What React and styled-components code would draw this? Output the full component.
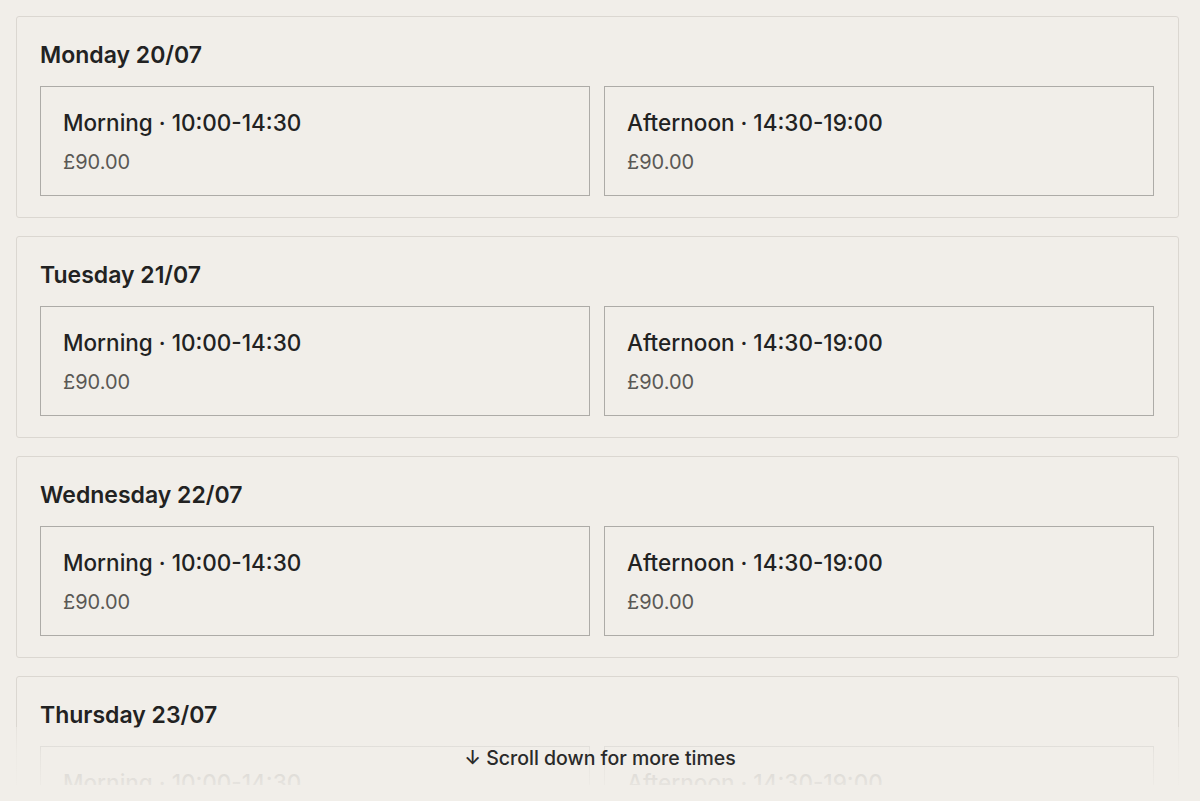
import React from 'react'
import styled, { createGlobalStyle } from 'styled-components'

const GlobalStyle = createGlobalStyle`
    html, body {
        margin: 0;
        padding: 0;
        background: #f1eee9;
        font-family: Inter, "Noto Sans", sans-serif;
        color: #222;
    }
`

const Page = styled.div`
    height: 801px;
    box-sizing: border-box;
    padding: 16px 21px 16px 16px;
`

const Viewport = styled.div`
    position: relative;
    height: 100%;
    overflow: hidden;
`

const List = styled.div`
    display: flex;
    flex-direction: column;
    gap: 18px;
`

const Day = styled.section`
    border: 1px solid #dbd7d1;
    border-radius: 3px;
    padding: 23px 24px 21px 23px;
`

const DayTitle = styled.h2`
    margin: 0 0 16px;
    font-size: 23px;
    line-height: 30px;
    font-weight: 600;
`

const Slots = styled.div`
    display: grid;
    grid-template-columns: 1fr 1fr;
    gap: 14px;
`

const Slot = styled.button`
    all: unset;
    box-sizing: border-box;
    height: 110px;
    border: 1.5px solid #adaba7;
    padding: 21px 22px;
    display: flex;
    flex-direction: column;
    gap: 11px;
    cursor: pointer;
`

const SlotName = styled.span`
    font-size: 22.5px;
    line-height: 30px;
    font-weight: 500;
    color: #222;
`

const Price = styled.span`
    font-size: 20px;
    line-height: 26px;
    font-weight: 400;
    color: #5a5855;
`

const Fade = styled.div`
    position: absolute;
    left: 0;
    right: 0;
    bottom: 0;
    height: 58px;
    box-sizing: border-box;
    display: flex;
    justify-content: center;
    align-items: flex-start;
    padding-top: 17px;
    background: linear-gradient(to bottom, rgba(241, 238, 233, 0.55) 0%, rgba(241, 238, 233, 0.85) 45%, rgba(241, 238, 233, 0.95) 100%);
`

const Hint = styled.span`
    font-size: 19.5px;
    line-height: 28px;
    font-weight: 500;
    color: #2a2a2a;
    margin-left: 5px;
`

const days = ['Monday 20/07', 'Tuesday 21/07', 'Wednesday 22/07', 'Thursday 23/07', 'Friday 24/07']
const slots = [
    { name: 'Morning', time: '10:00-14:30', price: '£90.00' },
    { name: 'Afternoon', time: '14:30-19:00', price: '£90.00' },
]

const App = () => {
    return (
        <>
            <GlobalStyle />
            <Page>
                <Viewport>
                    <List>
                        {days.map(day => (
                            <Day key={day}>
                                <DayTitle>{day}</DayTitle>
                                <Slots>
                                    {slots.map(s => (
                                        <Slot key={s.name}>
                                            <SlotName>{s.name} · {s.time}</SlotName>
                                            <Price>{s.price}</Price>
                                        </Slot>
                                    ))}
                                </Slots>
                            </Day>
                        ))}
                    </List>
                    <Fade>
                        <Hint>↓ Scroll down for more times</Hint>
                    </Fade>
                </Viewport>
            </Page>
        </>
    )
}

export default App
